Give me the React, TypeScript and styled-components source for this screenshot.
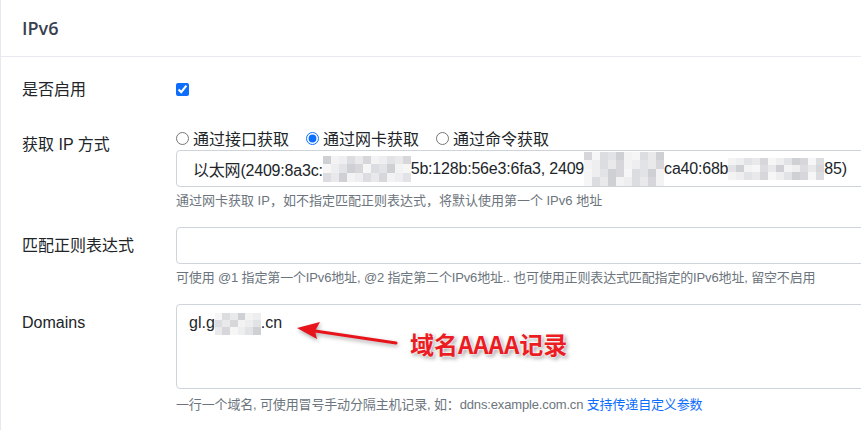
import React from 'react';
import styled, { createGlobalStyle } from 'styled-components';

const GlobalStyle = createGlobalStyle`
  body {
    margin: 0;
    overflow: hidden;
    background: #fff;
    font-family: "Liberation Sans", "Noto Sans CJK SC", sans-serif;
    color: #212529;
  }
`;

const grays = ['#e9e9eb', '#f3f3f4', '#dcdde0', '#cfd0d4', '#f6f6f7', '#e2e3e6', '#d7d7db', '#eeeef0'];

type MosaicProps = { cols: number; rows: number; w: number; h: number; seed: number };

const Mosaic = ({ cols, rows, w, h, seed }: MosaicProps) => {
    const cells = [];
    for (let i = 0; i < cols * rows; i++) {
        cells.push(grays[(i * 5 + seed * 3 + (i % 3)) % grays.length]);
    }
    return (
        <MosaicGrid $cols={cols} $rows={rows} $w={w} $h={h}>
            {cells.map((c, i) => <MosaicCell key={i} $c={c} />)}
        </MosaicGrid>
    );
};

const App = () => {
    return (
        <>
            <GlobalStyle />
            <Card>
                <CardHeader>
                    <Title>IPv6</Title>
                </CardHeader>

                <CardBody>
                    <FormRow $mb={18}>
                        <Label>是否启用</Label>
                        <CheckCell>
                            <Check type="checkbox" defaultChecked />
                        </CheckCell>
                    </FormRow>

                    <FormRow $mb={16}>
                        <Label>获取 IP 方式</Label>
                        <div>
                            <RadioGroup>
                                <RadioItem><Radio type="radio" name="src" />通过接口获取</RadioItem>
                                <RadioItem><Radio type="radio" name="src" defaultChecked />通过网卡获取</RadioItem>
                                <RadioItem><Radio type="radio" name="src" />通过命令获取</RadioItem>
                            </RadioGroup>
                            <SelectBox>
                                以太网(2409:8a3c:<Mosaic cols={11} rows={3} w={88} h={26} seed={1} />5b:128b:56e3:6fa3, 2409<Mosaic cols={10} rows={4} w={80} h={34} seed={2} />ca40:68b<Mosaic cols={12} rows={3} w={96} h={22} seed={3} />85)
                            </SelectBox>
                            <Help $mt={4}>通过网卡获取 IP，如不指定匹配正则表达式，将默认使用第一个 IPv6 地址</Help>
                        </div>
                    </FormRow>

                    <FormRow $mb={16}>
                        <Label>匹配正则表达式</Label>
                        <div>
                            <TextInput type="text" />
                            <Help $mt={4} $ls={-0.15}>可使用 @1 指定第一个IPv6地址, @2 指定第二个IPv6地址.. 也可使用正则表达式匹配指定的IPv6地址, 留空不启用</Help>
                        </div>
                    </FormRow>

                    <FormRow $mb={0}>
                        <Label>Domains</Label>
                        <div>
                            <TextArea>
                                gl.g<Mosaic cols={6} rows={3} w={46} h={22} seed={4} />.cn
                            </TextArea>
                            <Help $mt={6} $ls={-0.15}>一行一个域名, 可使用冒号手动分隔主机记录, 如：ddns:example.com.cn <Link>支持传递自定义参数</Link></Help>
                        </div>
                    </FormRow>
                </CardBody>

                <ArrowSvg width="115" height="36" viewBox="0 0 115 36">
                    <path d="M105 25 L24 13" stroke="#e8141b" strokeWidth="3" strokeLinecap="round" />
                    <path d="M6 10 L29 4 L24 13 L26 21 Z" fill="#e8141b" />
                </ArrowSvg>
                <Callout>域名AAAA记录</Callout>
            </Card>
        </>
    );
};

const Card = styled.div`
    position: relative;
    width: 1100px;
    min-height: 430px;
    border-left: 1px solid #e6e7ef;
    background: #fff;
`;

const CardHeader = styled.div`
    box-sizing: border-box;
    height: 57px;
    padding: 0 21px;
    display: flex;
    align-items: center;
    border-bottom: 1px solid #e9eaf0;
`;

const Title = styled.h5`
    margin: 0;
    font-size: 18px;
    font-weight: 600;
    color: #3a3f50;
    font-family: "Open Sans", sans-serif;
`;

const CardBody = styled.div`
    padding: 14px 0 0 21px;
`;

const FormRow = styled.div<{ $mb: number }>`
    display: grid;
    grid-template-columns: 154px 1fr;
    margin-bottom: ${p => p.$mb}px;
`;

const Label = styled.label`
    padding-top: 7px;
    font-size: 16px;
    line-height: 24px;
    color: #212529;
`;

const CheckCell = styled.div`
    height: 37px;
    display: flex;
    align-items: center;
`;

const Check = styled.input`
    margin: 0;
    width: 13px;
    height: 13px;
    accent-color: #0d6efd;
`;

const RadioGroup = styled.div`
    height: 24px;
    display: flex;
    align-items: center;
    gap: 17px;
`;

const RadioItem = styled.label`
    display: flex;
    align-items: center;
    font-size: 16px;
    color: #212529;
`;

const Radio = styled.input`
    margin: 0 4px 0 0;
    width: 13px;
    height: 13px;
    accent-color: #0d6efd;
`;

const SelectBox = styled.div`
    box-sizing: border-box;
    height: 37px;
    padding: 0 16px;
    display: flex;
    align-items: center;
    white-space: nowrap;
    border: 1px solid #ced4da;
    border-radius: 4px;
    font-size: 16px;
    letter-spacing: -0.2px;
    color: #212529;
`;

const TextInput = styled.input`
    display: block;
    box-sizing: border-box;
    width: 100%;
    height: 37px;
    margin: 0;
    border: 1px solid #ced4da;
    border-radius: 4px;
`;

const TextArea = styled.div`
    box-sizing: border-box;
    height: 85px;
    padding: 6px 12px;
    border: 1px solid #ced4da;
    border-radius: 4px;
    font-size: 16px;
    line-height: 24px;
    color: #212529;
    white-space: nowrap;
`;

const MosaicGrid = styled.span<{ $cols: number; $rows: number; $w: number; $h: number }>`
    display: inline-grid;
    vertical-align: middle;
    grid-template-columns: repeat(${p => p.$cols}, 1fr);
    grid-template-rows: repeat(${p => p.$rows}, 1fr);
    width: ${p => p.$w}px;
    height: ${p => p.$h}px;
`;

const MosaicCell = styled.span<{ $c: string }>`
    background: ${p => p.$c};
`;

const Help = styled.div<{ $mt: number; $ls?: number }>`
    margin-top: ${p => p.$mt}px;
    font-size: 13px;
    line-height: 20px;
    letter-spacing: ${p => p.$ls ?? 0}px;
    color: #6c757d;
    white-space: nowrap;
`;

const Link = styled.a`
    color: #0d6efd;
    text-decoration: none;
`;

const ArrowSvg = styled.svg`
    position: absolute;
    left: 290px;
    top: 318px;
    filter: drop-shadow(1px 2px 2px rgba(0, 0, 0, 0.35));
`;

const Callout = styled.div`
    position: absolute;
    left: 409px;
    top: 327px;
    font-size: 24px;
    line-height: 34px;
    font-weight: 700;
    color: #ec1c24;
    font-family: "Noto Sans CJK SC", sans-serif;
    text-shadow: 0 0 2px #fff, 0 0 3px #fff, 2px 2px 4px rgba(0, 0, 0, 0.45);
`;

export default App;
